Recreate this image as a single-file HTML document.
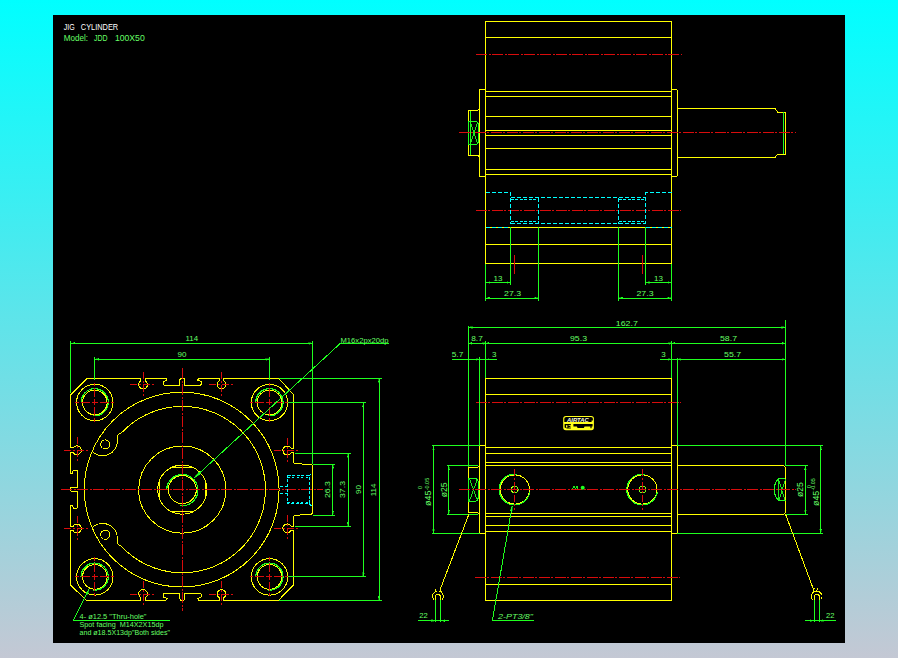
<!DOCTYPE html>
<html><head><meta charset="utf-8"><title>JIG CYLINDER JDD 100X50</title>
<style>
html,body{margin:0;padding:0;}
body{width:898px;height:658px;overflow:hidden;background:linear-gradient(to bottom,#00ffff 0%,#61e3e9 50%,#c4c8d4 100%);font-family:"Liberation Sans",sans-serif;}
#cad{position:absolute;left:53px;top:15px;width:792px;height:628px;background:#000;}
svg{position:absolute;left:0;top:0;}
svg text{font-family:"Liberation Sans",sans-serif;}
</style></head><body>
<div id="cad"></div>
<svg width="898" height="658" viewBox="0 0 898 658" shape-rendering="crispEdges">
<path d="M485.5,21.4 H671.7 V263.6 H485.5 Z" stroke="#ffff00" stroke-width="1.0" fill="none" />
<line x1="485.5" y1="37.3" x2="671.7" y2="37.3" stroke="#ffff00" stroke-width="1.0" />
<line x1="485.5" y1="91.4" x2="671.7" y2="91.4" stroke="#ffff00" stroke-width="1.0" />
<line x1="485.5" y1="96.2" x2="671.7" y2="96.2" stroke="#ffff00" stroke-width="1.0" />
<line x1="485.5" y1="116.4" x2="671.7" y2="116.4" stroke="#ffff00" stroke-width="1.0" />
<line x1="485.5" y1="130.5" x2="671.7" y2="130.5" stroke="#ffff00" stroke-width="1.0" />
<line x1="485.5" y1="135.2" x2="671.7" y2="135.2" stroke="#ffff00" stroke-width="1.0" />
<line x1="485.5" y1="148.5" x2="671.7" y2="148.5" stroke="#ffff00" stroke-width="1.0" />
<line x1="485.5" y1="169.5" x2="671.7" y2="169.5" stroke="#ffff00" stroke-width="1.0" />
<line x1="485.5" y1="174.3" x2="671.7" y2="174.3" stroke="#ffff00" stroke-width="1.0" />
<line x1="485.5" y1="227.4" x2="671.7" y2="227.4" stroke="#ffff00" stroke-width="1.0" />
<line x1="485.5" y1="244.4" x2="671.7" y2="244.4" stroke="#ffff00" stroke-width="1.0" />
<path d="M485.5,89.3 H481 Q479.4,89.3 479.4,91 V175 Q479.4,176.6 481,176.6 H485.5" stroke="#ffff00" stroke-width="1.0" fill="none" />
<path d="M671.7,89.3 H676 Q677.4,89.3 677.4,91 V175 Q677.4,176.6 676,176.6 H671.7" stroke="#ffff00" stroke-width="1.0" fill="none" />
<path d="M479.4,108.5 L477.5,110.5 H468.4 V155.2 H477.5 L479.4,157" stroke="#ffff00" stroke-width="1.0" fill="none" />
<line x1="470.2" y1="110.5" x2="470.2" y2="155.2" stroke="#1fff1f" stroke-width="1.0" />
<path d="M468.4,121.5 H476.5 Q478.5,122.5 478.5,125 V141 Q478.5,143.5 476.5,144.5 H468.4 Z" stroke="#1fff1f" stroke-width="1.0" fill="none" />
<path d="M470.2,122 L477.5,144 M477.5,122 L470.2,144" stroke="#1fff1f" stroke-width="0.9" fill="none" />
<path d="M677.4,108.5 H775 L777.5,112 H785.3 V154 H777.5 L775,157.5 H677.4" stroke="#ffff00" stroke-width="1.0" fill="none" />
<line x1="783.0" y1="112.0" x2="783.0" y2="154.0" stroke="#1fff1f" stroke-width="1.0" />
<line x1="476.0" y1="54.7" x2="681.6" y2="54.7" stroke="#d80c0c" stroke-width="1.0" stroke-dasharray="11 1.5 2 1.5"/>
<line x1="458.8" y1="132.7" x2="795.6" y2="132.7" stroke="#d80c0c" stroke-width="1.0" stroke-dasharray="11 1.5 2 1.5"/>
<line x1="475.6" y1="210.7" x2="681.0" y2="210.7" stroke="#d80c0c" stroke-width="1.0" stroke-dasharray="11 1.5 2 1.5"/>
<path d="M485.5,192.5 H510.5 V224 M538.5,197.6 V223.5 M510.5,197.6 H645.7 M510.5,223.5 H645.7 M671.7,192.5 H645.7 V224 M618.6,197.6 V223.5" stroke="#00ffff" stroke-width="1.1" fill="none" stroke-dasharray="4 2"/>
<path d="M510.5,199.2 H538.5 M510.5,221.9 H538.5 M618.6,199.2 H645.7 M618.6,221.9 H645.7" stroke="#00ffff" stroke-width="1.0" fill="none" stroke-dasharray="3 1.5"/>
<path d="M485.5,227.4 H510.5 M645.7,227.4 H671.7" stroke="#00ffff" stroke-width="1.0" fill="none" stroke-dasharray="4 2"/>
<line x1="510.6" y1="227.4" x2="510.6" y2="284.5" stroke="#1fff1f" stroke-width="1.0" />
<line x1="538.5" y1="227.4" x2="538.5" y2="300.5" stroke="#1fff1f" stroke-width="1.0" />
<line x1="485.5" y1="263.6" x2="485.5" y2="300.5" stroke="#1fff1f" stroke-width="1.0" />
<line x1="485.5" y1="282.5" x2="510.6" y2="282.5" stroke="#1fff1f" stroke-width="1.0" />
<path d="M485.5,282.5 L489.5,281.6 L489.5,283.4 Z" fill="#1fff1f" stroke="#1fff1f" stroke-width="0.4"/>
<path d="M510.6,282.5 L506.6,283.4 L506.6,281.6 Z" fill="#1fff1f" stroke="#1fff1f" stroke-width="0.4"/>
<line x1="485.5" y1="298.0" x2="538.5" y2="298.0" stroke="#1fff1f" stroke-width="1.0" />
<path d="M485.5,298.0 L489.5,297.1 L489.5,298.9 Z" fill="#1fff1f" stroke="#1fff1f" stroke-width="0.4"/>
<path d="M538.5,298.0 L534.5,298.9 L534.5,297.1 Z" fill="#1fff1f" stroke="#1fff1f" stroke-width="0.4"/>
<line x1="645.7" y1="227.4" x2="645.7" y2="284.5" stroke="#1fff1f" stroke-width="1.0" />
<line x1="618.6" y1="227.4" x2="618.6" y2="300.5" stroke="#1fff1f" stroke-width="1.0" />
<line x1="671.7" y1="263.6" x2="671.7" y2="300.5" stroke="#1fff1f" stroke-width="1.0" />
<line x1="645.7" y1="282.5" x2="671.7" y2="282.5" stroke="#1fff1f" stroke-width="1.0" />
<path d="M645.7,282.5 L649.7,281.6 L649.7,283.4 Z" fill="#1fff1f" stroke="#1fff1f" stroke-width="0.4"/>
<path d="M671.7,282.5 L667.7,283.4 L667.7,281.6 Z" fill="#1fff1f" stroke="#1fff1f" stroke-width="0.4"/>
<line x1="618.6" y1="298.0" x2="671.7" y2="298.0" stroke="#1fff1f" stroke-width="1.0" />
<path d="M618.6,298.0 L622.6,297.1 L622.6,298.9 Z" fill="#1fff1f" stroke="#1fff1f" stroke-width="0.4"/>
<path d="M671.7,298.0 L667.7,298.9 L667.7,297.1 Z" fill="#1fff1f" stroke="#1fff1f" stroke-width="0.4"/>
<text x="498.0" y="280.6" font-size="8" fill="#66ff66" text-anchor="middle" >13</text>
<text x="512.6" y="295.8" font-size="8" fill="#66ff66" text-anchor="middle" textLength="17.0" lengthAdjust="spacingAndGlyphs" >27.3</text>
<text x="658.5" y="280.6" font-size="8" fill="#66ff66" text-anchor="middle" >13</text>
<text x="645.0" y="295.8" font-size="8" fill="#66ff66" text-anchor="middle" textLength="17.0" lengthAdjust="spacingAndGlyphs" >27.3</text>
<line x1="514.6" y1="254.7" x2="514.6" y2="273.6" stroke="#d80c0c" stroke-width="1.0" />
<line x1="642.6" y1="254.7" x2="642.6" y2="273.6" stroke="#d80c0c" stroke-width="1.0" />
<path d="M70.5,394.9 L87,378.4 H140.7 V380.9 A4.4,4.4 0 1 0 145.5,380.9 V378.4 H165.9 L167,380.1 L163.5,381.6 L163.3,384.1 L164.5,385.6 H179.8 V379.6 L180.8,378.4 H183.9 L184.9,379.6 V385.6 H200.2 L201.3,384.1 L201.1,381.6 L197.7,380.1 L198.7,378.4 H219.1 V380.9 A4.4,4.4 0 1 0 223.9,380.9 V378.4 H278.7 L293.6,394.6 V448.1 H290.9 A4.4,4.4 0 1 0 290.9,452.9 H293.6 V462.2 Q293.8,463.5 295.5,463.5 H301.5 L302.5,464.5 H311.4 L312.7,466.3 V513 L311,514.6 H302.5 L295.5,515.6 Q293.8,515.8 293.6,517 V526.0 H290.9 A4.4,4.4 0 1 0 290.9,530.8 H293.6 V584.8 L278.6,600.2" stroke="#ffff00" stroke-width="1.0" fill="none" />
<path d="M70.5,585.2 L86.4,600.2 H140.7 V597.7 A4.4,4.4 0 1 1 145.5,597.7 V600.2 H165.9 L167,598.5 L163.5,597.0 L163.3,594.5 L164.5,593.0 H179.8 V599.0 L180.8,600.2 H183.9 L184.9,599.0 V593.0 H200.2 L201.3,594.5 L201.1,597.0 L197.7,598.5 L198.7,600.2 H219.1 V597.7 A4.4,4.4 0 1 1 223.9,597.7 V600.2 H278.6" stroke="#ffff00" stroke-width="1.0" fill="none" />
<path d="M70.5,394.9 V447.9 H73.2 A4.4,4.4 0 1 1 73.2,452.7 H70.5 V473 L72.9,473.6 L72.9,471 L73.8,470.3 H76.6 L77.4,471 V487.5 H71.2 L70.5,488.1 V490.6 L71.2,491.2 H77.4 V507.6 L76.6,508.4 H73.8 L73.1,507.8 L72.9,505.2 L70.5,505.8 V526.1 H73.2 A4.4,4.4 0 1 1 73.2,530.9 H70.5 V585.2" stroke="#ffff00" stroke-width="1.0" fill="none" />
<circle cx="94.8" cy="402.5" r="18.2" stroke="#ffff00" stroke-width="1.0" fill="none" />
<circle cx="94.8" cy="402.5" r="12.3" stroke="#ffff00" stroke-width="1.0" fill="none" />
<path d="M81.1,402.2 A13.6,13.6 0 1 1 93.2,415.8" stroke="#1fff1f" stroke-width="1.2" fill="none" />
<line x1="75.1" y1="402.5" x2="114.5" y2="402.5" stroke="#d80c0c" stroke-width="1.0" stroke-dasharray="3.4 2 9 2 6 2 9 2 3.4 2"/>
<line x1="94.8" y1="382.8" x2="94.8" y2="422.2" stroke="#d80c0c" stroke-width="1.0" stroke-dasharray="3.4 2 9 2 6 2 9 2 3.4 2"/>
<circle cx="269.5" cy="402.5" r="18.2" stroke="#ffff00" stroke-width="1.0" fill="none" />
<circle cx="269.5" cy="402.5" r="12.3" stroke="#ffff00" stroke-width="1.0" fill="none" />
<path d="M255.8,402.2 A13.6,13.6 0 1 1 267.9,415.8" stroke="#1fff1f" stroke-width="1.2" fill="none" />
<line x1="249.8" y1="402.5" x2="289.2" y2="402.5" stroke="#d80c0c" stroke-width="1.0" stroke-dasharray="3.4 2 9 2 6 2 9 2 3.4 2"/>
<line x1="269.5" y1="382.8" x2="269.5" y2="422.2" stroke="#d80c0c" stroke-width="1.0" stroke-dasharray="3.4 2 9 2 6 2 9 2 3.4 2"/>
<circle cx="94.8" cy="576.9" r="18.2" stroke="#ffff00" stroke-width="1.0" fill="none" />
<circle cx="94.8" cy="576.9" r="12.3" stroke="#ffff00" stroke-width="1.0" fill="none" />
<path d="M81.1,576.6 A13.6,13.6 0 1 1 93.2,590.2" stroke="#1fff1f" stroke-width="1.2" fill="none" />
<line x1="75.1" y1="576.9" x2="114.5" y2="576.9" stroke="#d80c0c" stroke-width="1.0" stroke-dasharray="3.4 2 9 2 6 2 9 2 3.4 2"/>
<line x1="94.8" y1="557.2" x2="94.8" y2="596.6" stroke="#d80c0c" stroke-width="1.0" stroke-dasharray="3.4 2 9 2 6 2 9 2 3.4 2"/>
<circle cx="269.5" cy="576.9" r="18.2" stroke="#ffff00" stroke-width="1.0" fill="none" />
<circle cx="269.5" cy="576.9" r="12.3" stroke="#ffff00" stroke-width="1.0" fill="none" />
<path d="M255.8,576.6 A13.6,13.6 0 1 1 267.9,590.2" stroke="#1fff1f" stroke-width="1.2" fill="none" />
<line x1="249.8" y1="576.9" x2="289.2" y2="576.9" stroke="#d80c0c" stroke-width="1.0" stroke-dasharray="3.4 2 9 2 6 2 9 2 3.4 2"/>
<line x1="269.5" y1="557.2" x2="269.5" y2="596.6" stroke="#d80c0c" stroke-width="1.0" stroke-dasharray="3.4 2 9 2 6 2 9 2 3.4 2"/>
<line x1="130.1" y1="384.7" x2="156.1" y2="384.7" stroke="#d80c0c" stroke-width="1.0" stroke-dasharray="7 2 2 2"/>
<line x1="143.1" y1="371.7" x2="143.1" y2="397.7" stroke="#d80c0c" stroke-width="1.0" stroke-dasharray="7 2 2 2"/>
<line x1="208.5" y1="384.7" x2="234.5" y2="384.7" stroke="#d80c0c" stroke-width="1.0" stroke-dasharray="7 2 2 2"/>
<line x1="221.5" y1="371.7" x2="221.5" y2="397.7" stroke="#d80c0c" stroke-width="1.0" stroke-dasharray="7 2 2 2"/>
<line x1="130.1" y1="594.2" x2="156.1" y2="594.2" stroke="#d80c0c" stroke-width="1.0" stroke-dasharray="7 2 2 2"/>
<line x1="143.1" y1="581.2" x2="143.1" y2="607.2" stroke="#d80c0c" stroke-width="1.0" stroke-dasharray="7 2 2 2"/>
<line x1="208.5" y1="594.2" x2="234.5" y2="594.2" stroke="#d80c0c" stroke-width="1.0" stroke-dasharray="7 2 2 2"/>
<line x1="221.5" y1="581.2" x2="221.5" y2="607.2" stroke="#d80c0c" stroke-width="1.0" stroke-dasharray="7 2 2 2"/>
<line x1="64.2" y1="450.3" x2="90.2" y2="450.3" stroke="#d80c0c" stroke-width="1.0" stroke-dasharray="7 2 2 2"/>
<line x1="77.2" y1="437.3" x2="77.2" y2="463.3" stroke="#d80c0c" stroke-width="1.0" stroke-dasharray="7 2 2 2"/>
<line x1="64.2" y1="528.5" x2="90.2" y2="528.5" stroke="#d80c0c" stroke-width="1.0" stroke-dasharray="7 2 2 2"/>
<line x1="77.2" y1="515.5" x2="77.2" y2="541.5" stroke="#d80c0c" stroke-width="1.0" stroke-dasharray="7 2 2 2"/>
<line x1="274.0" y1="450.5" x2="300.0" y2="450.5" stroke="#d80c0c" stroke-width="1.0" stroke-dasharray="7 2 2 2"/>
<line x1="287.0" y1="437.5" x2="287.0" y2="463.5" stroke="#d80c0c" stroke-width="1.0" stroke-dasharray="7 2 2 2"/>
<line x1="274.0" y1="528.4" x2="300.0" y2="528.4" stroke="#d80c0c" stroke-width="1.0" stroke-dasharray="7 2 2 2"/>
<line x1="287.0" y1="515.4" x2="287.0" y2="541.4" stroke="#d80c0c" stroke-width="1.0" stroke-dasharray="7 2 2 2"/>
<circle cx="181.7" cy="489.6" r="97.4" stroke="#ffff00" stroke-width="1.0" fill="none" />
<circle cx="182.3" cy="489.6" r="43.6" stroke="#ffff00" stroke-width="1.0" fill="none" />
<circle cx="182.3" cy="489.6" r="24.6" stroke="#ffff00" stroke-width="1.0" fill="none" />
<circle cx="182.3" cy="489.6" r="14.0" stroke="#ffff00" stroke-width="1.0" fill="none" />
<line x1="171.3" y1="467.6" x2="193.3" y2="467.6" stroke="#ffff00" stroke-width="1.0" />
<line x1="171.3" y1="511.6" x2="193.3" y2="511.6" stroke="#ffff00" stroke-width="1.0" />
<line x1="159.5" y1="480.4" x2="159.5" y2="498.8" stroke="#ffff00" stroke-width="1.0" />
<line x1="205.1" y1="480.4" x2="205.1" y2="498.8" stroke="#ffff00" stroke-width="1.0" />
<path d="M166.7,490.0 A15.6,15.6 0 1 1 180.3,505.6" stroke="#1fff1f" stroke-width="1.2" fill="none" />
<path d="M92.1,451.4 A14.8,14.8 0 0 0 117.4,441.0 V437.0 Q117.4,434.0 121.3,433.0 A83.2,83.2 0 1 1 121.3,546.2 Q117.4,545.2 117.4,542.2 V538.2 A14.8,14.8 0 0 0 92.1,527.8" stroke="#ffff00" stroke-width="1.0" fill="none" />
<circle cx="105.2" cy="444.4" r="4.5" stroke="#ffff00" stroke-width="1.0" fill="none" />
<circle cx="105.2" cy="534.8" r="4.5" stroke="#ffff00" stroke-width="1.0" fill="none" />
<line x1="61.0" y1="489.4" x2="323.0" y2="489.4" stroke="#d80c0c" stroke-width="1.0" stroke-dasharray="11 1.5 2 1.5"/>
<line x1="182.3" y1="368.0" x2="182.3" y2="611.0" stroke="#d80c0c" stroke-width="1.0" stroke-dasharray="11 1.5 2 1.5"/>
<path d="M287.5,475.8 H309 V503.6 H287.5 Z" stroke="#00ffff" stroke-width="1.0" fill="none" stroke-dasharray="3 1.6"/>
<path d="M309,475.8 L311.5,473.6 M309,503.6 L311.5,505.8" stroke="#00ffff" stroke-width="1.0" fill="none" />
<path d="M287.5,477.4 H309 M287.5,502 H309" stroke="#00ffff" stroke-width="1.0" fill="none" stroke-dasharray="2 2.5"/>
<path d="M280.4,486.3 H287.5 M280.4,493.2 H287.5" stroke="#00ffff" stroke-width="1.0" fill="none" stroke-dasharray="3 1.2"/>
<line x1="70.5" y1="341.4" x2="70.5" y2="393.0" stroke="#1fff1f" stroke-width="1.0" />
<line x1="312.7" y1="341.4" x2="312.7" y2="464.0" stroke="#1fff1f" stroke-width="1.0" />
<line x1="70.5" y1="343.3" x2="312.7" y2="343.3" stroke="#1fff1f" stroke-width="1.0" />
<path d="M70.5,343.3 L74.5,342.4 L74.5,344.2 Z" fill="#1fff1f" stroke="#1fff1f" stroke-width="0.4"/>
<path d="M312.7,343.3 L308.7,344.2 L308.7,342.4 Z" fill="#1fff1f" stroke="#1fff1f" stroke-width="0.4"/>
<text x="191.8" y="341.0" font-size="8" fill="#66ff66" text-anchor="middle" textLength="12.5" lengthAdjust="spacingAndGlyphs" >114</text>
<line x1="94.8" y1="357.3" x2="94.8" y2="379.6" stroke="#1fff1f" stroke-width="1.0" />
<line x1="269.5" y1="357.3" x2="269.5" y2="379.6" stroke="#1fff1f" stroke-width="1.0" />
<line x1="94.8" y1="359.2" x2="269.5" y2="359.2" stroke="#1fff1f" stroke-width="1.0" />
<path d="M94.8,359.2 L98.8,358.3 L98.8,360.1 Z" fill="#1fff1f" stroke="#1fff1f" stroke-width="0.4"/>
<path d="M269.5,359.2 L265.5,360.1 L265.5,358.3 Z" fill="#1fff1f" stroke="#1fff1f" stroke-width="0.4"/>
<text x="182.0" y="357.0" font-size="8" fill="#66ff66" text-anchor="middle" >90</text>
<line x1="279.0" y1="378.4" x2="381.5" y2="378.4" stroke="#1fff1f" stroke-width="1.0" />
<line x1="279.0" y1="600.2" x2="381.5" y2="600.2" stroke="#1fff1f" stroke-width="1.0" />
<line x1="379.0" y1="378.4" x2="379.0" y2="600.2" stroke="#1fff1f" stroke-width="1.0" />
<path d="M379.0,378.4 L379.9,382.4 L378.1,382.4 Z" fill="#1fff1f" stroke="#1fff1f" stroke-width="0.4"/>
<path d="M379.0,600.2 L378.1,596.2 L379.9,596.2 Z" fill="#1fff1f" stroke="#1fff1f" stroke-width="0.4"/>
<line x1="288.0" y1="402.5" x2="365.5" y2="402.5" stroke="#1fff1f" stroke-width="1.0" />
<line x1="288.0" y1="576.9" x2="365.5" y2="576.9" stroke="#1fff1f" stroke-width="1.0" />
<line x1="363.3" y1="402.5" x2="363.3" y2="576.9" stroke="#1fff1f" stroke-width="1.0" />
<path d="M363.3,402.5 L364.2,406.5 L362.4,406.5 Z" fill="#1fff1f" stroke="#1fff1f" stroke-width="0.4"/>
<path d="M363.3,576.9 L362.4,572.9 L364.2,572.9 Z" fill="#1fff1f" stroke="#1fff1f" stroke-width="0.4"/>
<line x1="294.8" y1="453.2" x2="350.5" y2="453.2" stroke="#1fff1f" stroke-width="1.0" />
<line x1="294.8" y1="526.2" x2="350.5" y2="526.2" stroke="#1fff1f" stroke-width="1.0" />
<line x1="348.1" y1="453.2" x2="348.1" y2="526.2" stroke="#1fff1f" stroke-width="1.0" />
<path d="M348.1,453.2 L349.0,457.2 L347.2,457.2 Z" fill="#1fff1f" stroke="#1fff1f" stroke-width="0.4"/>
<path d="M348.1,526.2 L347.2,522.2 L349.0,522.2 Z" fill="#1fff1f" stroke="#1fff1f" stroke-width="0.4"/>
<line x1="312.7" y1="464.2" x2="335.0" y2="464.2" stroke="#1fff1f" stroke-width="1.0" />
<line x1="312.7" y1="515.0" x2="335.0" y2="515.0" stroke="#1fff1f" stroke-width="1.0" />
<line x1="332.8" y1="464.2" x2="332.8" y2="515.0" stroke="#1fff1f" stroke-width="1.0" />
<path d="M332.8,464.2 L333.7,468.2 L331.9,468.2 Z" fill="#1fff1f" stroke="#1fff1f" stroke-width="0.4"/>
<path d="M332.8,515.0 L331.9,511.0 L333.7,511.0 Z" fill="#1fff1f" stroke="#1fff1f" stroke-width="0.4"/>
<text x="330.2" y="489.5" font-size="8" fill="#66ff66" text-anchor="middle" transform="rotate(-90 330.2 489.5)" textLength="17.0" lengthAdjust="spacingAndGlyphs" >26.3</text>
<text x="345.3" y="489.5" font-size="8" fill="#66ff66" text-anchor="middle" transform="rotate(-90 345.3 489.5)" textLength="17.0" lengthAdjust="spacingAndGlyphs" >37.3</text>
<text x="361.0" y="489.5" font-size="8" fill="#66ff66" text-anchor="middle" transform="rotate(-90 361.0 489.5)" >90</text>
<text x="376.0" y="490.0" font-size="8" fill="#66ff66" text-anchor="middle" transform="rotate(-90 376.0 490.0)" textLength="12.5" lengthAdjust="spacingAndGlyphs" >114</text>
<path d="M389,343.7 H340 L193.8,478.3" stroke="#1fff1f" stroke-width="1.0" fill="none" />
<path d="M193.8,478.3 L198.8,471.9 L200.6,473.8 Z" fill="#1fff1f" stroke="#1fff1f" stroke-width="0.4"/>
<text x="340.5" y="342.6" font-size="7.5" fill="#66ff66" text-anchor="start" textLength="48.0" lengthAdjust="spacingAndGlyphs" >M16x2px20dp</text>
<path d="M169.7,620.4 H73.3 L88.9,589.5" stroke="#1fff1f" stroke-width="1.0" fill="none" />
<path d="M88.9,589.5 L87.6,594.4 L85.6,593.4 Z" fill="#1fff1f" stroke="#1fff1f" stroke-width="0.4"/>
<text x="79.5" y="618.9" font-size="7.5" fill="#66ff66" text-anchor="start" textLength="67.0" lengthAdjust="spacingAndGlyphs" >4- ø12.5 "Thru-hole"</text>
<text x="79.5" y="627.3" font-size="7.5" fill="#66ff66" text-anchor="start" textLength="84.0" lengthAdjust="spacingAndGlyphs" xml:space="preserve">Spot facing  M14X2X15dp</text>
<text x="79.5" y="635.2" font-size="7.5" fill="#66ff66" text-anchor="start" textLength="90.5" lengthAdjust="spacingAndGlyphs" >and ø18.5X13dp"Both sides"</text>
<path d="M485.5,378.2 H671.5 V600.5 H485.5 Z" stroke="#ffff00" stroke-width="1.0" fill="none" />
<line x1="485.5" y1="394.1" x2="671.5" y2="394.1" stroke="#ffff00" stroke-width="1.0" />
<line x1="485.5" y1="447.3" x2="671.5" y2="447.3" stroke="#ffff00" stroke-width="1.0" />
<line x1="485.5" y1="453.5" x2="671.5" y2="453.5" stroke="#ffff00" stroke-width="1.0" />
<line x1="485.5" y1="462.6" x2="671.5" y2="462.6" stroke="#ffff00" stroke-width="1.0" />
<line x1="485.5" y1="465.6" x2="671.5" y2="465.6" stroke="#ffff00" stroke-width="1.0" />
<line x1="485.5" y1="513.8" x2="671.5" y2="513.8" stroke="#ffff00" stroke-width="1.0" />
<line x1="485.5" y1="516.8" x2="671.5" y2="516.8" stroke="#ffff00" stroke-width="1.0" />
<line x1="485.5" y1="525.7" x2="671.5" y2="525.7" stroke="#ffff00" stroke-width="1.0" />
<line x1="485.5" y1="531.8" x2="671.5" y2="531.8" stroke="#ffff00" stroke-width="1.0" />
<line x1="485.5" y1="584.6" x2="671.5" y2="584.6" stroke="#ffff00" stroke-width="1.0" />
<path d="M485.5,445.5 H481 Q479.6,445.5 479.6,447 V532 Q479.6,533.4 481,533.4 H485.5" stroke="#ffff00" stroke-width="1.0" fill="none" />
<path d="M671.5,445.5 H676 Q677.4,445.5 677.4,447 V532 Q677.4,533.4 676,533.4 H671.5" stroke="#ffff00" stroke-width="1.0" fill="none" />
<path d="M677.4,465.4 H783.6 L785.5,467.2 V512.4 L783.6,514.2 H677.4" stroke="#ffff00" stroke-width="1.0" fill="none" />
<path d="M785.4,478.3 H778.6 Q774.2,483 774.2,489.5 Q774.2,496 778.6,500.7 H785.4" stroke="#1fff1f" stroke-width="1.1" fill="none" />
<path d="M778.6,478.5 L785.4,500.5 M785.4,478.5 L778.6,500.5" stroke="#1fff1f" stroke-width="0.9" fill="none" />
<line x1="778.6" y1="478.3" x2="778.6" y2="500.7" stroke="#1fff1f" stroke-width="0.9" />
<path d="M479.6,465.5 L477,467.6 H468.7 V512 H477 L479.6,514" stroke="#ffff00" stroke-width="1.0" fill="none" />
<path d="M468.7,478.5 H476 Q478.3,479.5 478.3,482 V497.6 Q478.3,500 476,501.1 H468.7 Z" stroke="#1fff1f" stroke-width="1.1" fill="none" />
<path d="M469.5,479 L477.5,500.6 M477.5,479 L469.5,500.6" stroke="#1fff1f" stroke-width="0.9" fill="none" />
<circle cx="514.8" cy="489.5" r="14.6" stroke="#ffff00" stroke-width="1.0" fill="none" />
<circle cx="514.8" cy="489.5" r="3.3" stroke="#ffff00" stroke-width="1.0" fill="none" />
<path d="M517.2,474.4 A15.4,15.4 0 1 0 529.7,492.3" stroke="#1fff1f" stroke-width="1.1" fill="none" />
<circle cx="514.8" cy="489.5" r="3.3" stroke="#1fff1f" stroke-width="0.6" fill="none" />
<line x1="514.8" y1="469.0" x2="514.8" y2="509.5" stroke="#d80c0c" stroke-width="1.0" stroke-dasharray="7 2 2 2"/>
<circle cx="642.4" cy="489.5" r="14.6" stroke="#ffff00" stroke-width="1.0" fill="none" />
<circle cx="642.4" cy="489.5" r="3.3" stroke="#ffff00" stroke-width="1.0" fill="none" />
<path d="M644.8,474.4 A15.4,15.4 0 1 0 657.3,492.3" stroke="#1fff1f" stroke-width="1.1" fill="none" />
<circle cx="642.4" cy="489.5" r="3.3" stroke="#1fff1f" stroke-width="0.6" fill="none" />
<line x1="642.4" y1="469.0" x2="642.4" y2="509.5" stroke="#d80c0c" stroke-width="1.0" stroke-dasharray="7 2 2 2"/>
<line x1="475.5" y1="402.4" x2="681.4" y2="402.4" stroke="#d80c0c" stroke-width="1.0" stroke-dasharray="11 1.5 2 1.5"/>
<line x1="459.0" y1="489.4" x2="796.0" y2="489.4" stroke="#d80c0c" stroke-width="1.0" stroke-dasharray="11 1.5 2 1.5"/>
<line x1="474.6" y1="577.3" x2="680.0" y2="577.3" stroke="#d80c0c" stroke-width="1.0" stroke-dasharray="11 1.5 2 1.5"/>
<g shape-rendering="auto">
<rect x="563.2" y="415.9" width="30.7" height="14.3" rx="2.6" fill="#ffff1a"/>
<path d="M566.2,417 H591 Q592.9,417 592.9,418.8 V420.5 H591.6 V422.1 H564.3 V418.8 Q564.3,417 566.2,417 Z" fill="#000"/>
<text x="567" y="421.6" font-size="5.2" font-style="italic" font-weight="bold" fill="#ffffe0" textLength="21.8" lengthAdjust="spacingAndGlyphs">AIRTAC</text>
<path d="M564.6,424 H570.8 V425.2 H568.6 V425.9 H570.4 V426.9 H568.6 V427.6 H570.8 V428.6 H567 L564.6,427.4 Z M573.4,424 H592.6 V426.6 H591.6 V428.2 H590.4 V426.6 H584.6 L583.8,428 H577.6 L576.8,426.6 H573.4 Z" fill="#000"/>
<path d="M566,425.2 H567.4 V427.4 H566 Z" fill="#ffff1a"/>
</g>
<path d="M572.4,489.2 L574,486 L575.4,489.2 M575.2,489.2 L576.8,486 L578.3,489.2" stroke="#1fff1f" stroke-width="0.9" fill="none" />
<circle cx="582.7" cy="487.8" r="2" fill="#1fff1f" shape-rendering="auto"/>
<line x1="468.7" y1="325.8" x2="468.7" y2="467.0" stroke="#1fff1f" stroke-width="1.0" />
<line x1="785.4" y1="320.3" x2="785.4" y2="465.0" stroke="#1fff1f" stroke-width="1.0" />
<line x1="468.7" y1="327.4" x2="785.4" y2="327.4" stroke="#1fff1f" stroke-width="1.0" />
<path d="M468.7,327.4 L472.7,326.5 L472.7,328.3 Z" fill="#1fff1f" stroke="#1fff1f" stroke-width="0.4"/>
<path d="M785.4,327.4 L781.4,328.3 L781.4,326.5 Z" fill="#1fff1f" stroke="#1fff1f" stroke-width="0.4"/>
<text x="626.8" y="325.6" font-size="8" fill="#66ff66" text-anchor="middle" textLength="22.0" lengthAdjust="spacingAndGlyphs" >162.7</text>
<line x1="485.5" y1="341.2" x2="485.5" y2="378.0" stroke="#1fff1f" stroke-width="1.0" />
<line x1="671.5" y1="341.2" x2="671.5" y2="378.0" stroke="#1fff1f" stroke-width="1.0" />
<line x1="468.7" y1="343.3" x2="785.4" y2="343.3" stroke="#1fff1f" stroke-width="1.0" />
<path d="M468.7,343.3 L471.7,342.4 L471.7,344.2 Z" fill="#1fff1f" stroke="#1fff1f" stroke-width="0.4"/>
<path d="M485.5,343.3 L482.5,344.2 L482.5,342.4 Z" fill="#1fff1f" stroke="#1fff1f" stroke-width="0.4"/>
<path d="M485.5,343.3 L488.5,342.4 L488.5,344.2 Z" fill="#1fff1f" stroke="#1fff1f" stroke-width="0.4"/>
<path d="M671.5,343.3 L668.5,344.2 L668.5,342.4 Z" fill="#1fff1f" stroke="#1fff1f" stroke-width="0.4"/>
<path d="M671.5,343.3 L674.5,342.4 L674.5,344.2 Z" fill="#1fff1f" stroke="#1fff1f" stroke-width="0.4"/>
<path d="M785.4,343.3 L782.4,344.2 L782.4,342.4 Z" fill="#1fff1f" stroke="#1fff1f" stroke-width="0.4"/>
<text x="477.0" y="340.8" font-size="8" fill="#66ff66" text-anchor="middle" textLength="11.5" lengthAdjust="spacingAndGlyphs" >8.7</text>
<text x="578.5" y="340.8" font-size="8" fill="#66ff66" text-anchor="middle" textLength="17.0" lengthAdjust="spacingAndGlyphs" >95.3</text>
<text x="728.5" y="340.8" font-size="8" fill="#66ff66" text-anchor="middle" textLength="17.0" lengthAdjust="spacingAndGlyphs" >58.7</text>
<line x1="479.6" y1="357.3" x2="479.6" y2="445.5" stroke="#1fff1f" stroke-width="1.0" />
<line x1="677.4" y1="357.5" x2="677.4" y2="445.5" stroke="#1fff1f" stroke-width="1.0" />
<line x1="451.8" y1="359.4" x2="497.0" y2="359.4" stroke="#1fff1f" stroke-width="1.0" />
<path d="M479.6,359.4 L476.1,360.3 L476.1,358.5 Z" fill="#1fff1f" stroke="#1fff1f" stroke-width="0.4"/>
<path d="M485.5,359.4 L489.0,358.5 L489.0,360.3 Z" fill="#1fff1f" stroke="#1fff1f" stroke-width="0.4"/>
<text x="457.5" y="356.8" font-size="8" fill="#66ff66" text-anchor="middle" textLength="11.5" lengthAdjust="spacingAndGlyphs" >5.7</text>
<text x="494.2" y="356.8" font-size="8" fill="#66ff66" text-anchor="middle" >3</text>
<line x1="660.2" y1="359.4" x2="785.4" y2="359.4" stroke="#1fff1f" stroke-width="1.0" />
<path d="M671.5,359.4 L668.0,360.3 L668.0,358.5 Z" fill="#1fff1f" stroke="#1fff1f" stroke-width="0.4"/>
<path d="M677.4,359.4 L680.9,358.5 L680.9,360.3 Z" fill="#1fff1f" stroke="#1fff1f" stroke-width="0.4"/>
<path d="M785.4,359.4 L781.9,360.3 L781.9,358.5 Z" fill="#1fff1f" stroke="#1fff1f" stroke-width="0.4"/>
<text x="663.4" y="356.8" font-size="8" fill="#66ff66" text-anchor="middle" >3</text>
<text x="732.6" y="356.8" font-size="8" fill="#66ff66" text-anchor="middle" textLength="17.0" lengthAdjust="spacingAndGlyphs" >55.7</text>
<line x1="432.0" y1="445.5" x2="479.6" y2="445.5" stroke="#1fff1f" stroke-width="1.0" />
<line x1="432.0" y1="533.4" x2="479.6" y2="533.4" stroke="#1fff1f" stroke-width="1.0" />
<line x1="433.5" y1="445.5" x2="433.5" y2="533.4" stroke="#1fff1f" stroke-width="1.0" />
<path d="M433.5,445.5 L434.4,449.5 L432.6,449.5 Z" fill="#1fff1f" stroke="#1fff1f" stroke-width="0.4"/>
<path d="M433.5,533.4 L432.6,529.4 L434.4,529.4 Z" fill="#1fff1f" stroke="#1fff1f" stroke-width="0.4"/>
<line x1="447.0" y1="465.5" x2="478.0" y2="465.5" stroke="#1fff1f" stroke-width="1.0" />
<line x1="447.0" y1="514.0" x2="478.0" y2="514.0" stroke="#1fff1f" stroke-width="1.0" />
<line x1="448.8" y1="465.5" x2="448.8" y2="514.0" stroke="#1fff1f" stroke-width="1.0" />
<path d="M448.8,465.5 L449.7,469.5 L447.9,469.5 Z" fill="#1fff1f" stroke="#1fff1f" stroke-width="0.4"/>
<path d="M448.8,514.0 L447.9,510.0 L449.7,510.0 Z" fill="#1fff1f" stroke="#1fff1f" stroke-width="0.4"/>
<text x="430.9" y="506.0" font-size="8.4" fill="#66ff66" text-anchor="start" transform="rotate(-90 430.9 506.0)" textLength="15.5" lengthAdjust="spacingAndGlyphs" >ø45</text>
<text x="428.6" y="490.3" font-size="5.6" fill="#66ff66" text-anchor="start" transform="rotate(-90 428.6 490.3)" textLength="12.5" lengthAdjust="spacingAndGlyphs" >-0.05</text>
<text x="422.0" y="487.4" font-size="5.6" fill="#66ff66" text-anchor="middle" transform="rotate(-90 422.0 487.4)" >0</text>
<text x="447.2" y="489.8" font-size="8.4" fill="#66ff66" text-anchor="middle" transform="rotate(-90 447.2 489.8)" textLength="14.8" lengthAdjust="spacingAndGlyphs" >ø25</text>
<line x1="677.4" y1="445.5" x2="823.0" y2="445.5" stroke="#1fff1f" stroke-width="1.0" />
<line x1="677.4" y1="533.4" x2="823.0" y2="533.4" stroke="#1fff1f" stroke-width="1.0" />
<line x1="820.8" y1="445.5" x2="820.8" y2="533.4" stroke="#1fff1f" stroke-width="1.0" />
<path d="M820.8,445.5 L821.7,449.5 L819.9,449.5 Z" fill="#1fff1f" stroke="#1fff1f" stroke-width="0.4"/>
<path d="M820.8,533.4 L819.9,529.4 L821.7,529.4 Z" fill="#1fff1f" stroke="#1fff1f" stroke-width="0.4"/>
<line x1="785.4" y1="465.5" x2="807.5" y2="465.5" stroke="#1fff1f" stroke-width="1.0" />
<line x1="785.4" y1="514.0" x2="807.5" y2="514.0" stroke="#1fff1f" stroke-width="1.0" />
<line x1="805.4" y1="465.5" x2="805.4" y2="514.0" stroke="#1fff1f" stroke-width="1.0" />
<path d="M805.4,465.5 L806.3,469.5 L804.5,469.5 Z" fill="#1fff1f" stroke="#1fff1f" stroke-width="0.4"/>
<path d="M805.4,514.0 L804.5,510.0 L806.3,510.0 Z" fill="#1fff1f" stroke="#1fff1f" stroke-width="0.4"/>
<text x="802.9" y="489.5" font-size="8.4" fill="#66ff66" text-anchor="middle" transform="rotate(-90 802.9 489.5)" textLength="14.8" lengthAdjust="spacingAndGlyphs" >ø25</text>
<text x="818.7" y="506.0" font-size="8.4" fill="#66ff66" text-anchor="start" transform="rotate(-90 818.7 506.0)" textLength="15.3" lengthAdjust="spacingAndGlyphs" >ø45</text>
<text x="815.2" y="490.6" font-size="5.6" fill="#66ff66" text-anchor="start" transform="rotate(-90 815.2 490.6)" textLength="12.3" lengthAdjust="spacingAndGlyphs" >-0.05</text>
<text x="810.6" y="486.7" font-size="5.6" fill="#66ff66" text-anchor="middle" transform="rotate(-90 810.6 486.7)" >0</text>
<line x1="469.2" y1="513.4" x2="440.8" y2="587.8" stroke="#ffff00" stroke-width="1.0" />
<line x1="785.6" y1="514.3" x2="813.8" y2="590.3" stroke="#ffff00" stroke-width="1.0" />
<path d="M433.7,599.6 A5.3,5.3 0 1 1 442.1,599.6 M435.3,600 V597 A2.6,2.6 0 0 1 440.5,597 V600" stroke="#ffff00" stroke-width="1.0" fill="none" />
<path d="M434.7,591.6 L436.1,588.6 M441.1,591.6 L440.5,588.4" stroke="#ffff00" stroke-width="1.0" fill="none" />
<line x1="435.3" y1="600.0" x2="435.3" y2="621.5" stroke="#1fff1f" stroke-width="1.0" />
<line x1="440.5" y1="600.0" x2="440.5" y2="621.5" stroke="#1fff1f" stroke-width="1.0" />
<path d="M812.5,599.6 A5.3,5.3 0 1 1 820.9,599.6 M814.1,600 V597 A2.6,2.6 0 0 1 819.3,597 V600" stroke="#ffff00" stroke-width="1.0" fill="none" />
<path d="M816.3,591.6 L817.7,588.6 M813.5,591.6 L814.1,588.4" stroke="#ffff00" stroke-width="1.0" fill="none" />
<line x1="814.1" y1="600.0" x2="814.1" y2="621.5" stroke="#1fff1f" stroke-width="1.0" />
<line x1="819.3" y1="600.0" x2="819.3" y2="621.5" stroke="#1fff1f" stroke-width="1.0" />
<line x1="417.9" y1="620.6" x2="448.8" y2="620.6" stroke="#1fff1f" stroke-width="1.0" />
<path d="M435.3,620.6 L431.3,621.5 L431.3,619.7 Z" fill="#1fff1f" stroke="#1fff1f" stroke-width="0.4"/>
<path d="M440.5,620.6 L444.5,619.7 L444.5,621.5 Z" fill="#1fff1f" stroke="#1fff1f" stroke-width="0.4"/>
<text x="423.6" y="618.0" font-size="7.6" fill="#66ff66" text-anchor="middle" >22</text>
<line x1="805.0" y1="620.6" x2="836.0" y2="620.6" stroke="#1fff1f" stroke-width="1.0" />
<path d="M814.1,620.6 L810.1,621.5 L810.1,619.7 Z" fill="#1fff1f" stroke="#1fff1f" stroke-width="0.4"/>
<path d="M819.3,620.6 L823.3,619.7 L823.3,621.5 Z" fill="#1fff1f" stroke="#1fff1f" stroke-width="0.4"/>
<text x="830.3" y="618.0" font-size="7.6" fill="#66ff66" text-anchor="middle" >22</text>
<path d="M533.6,620.3 H492.4 L512.2,505.8" stroke="#1fff1f" stroke-width="1.0" fill="none" />
<path d="M512.2,505.8 L512.4,510.9 L510.3,510.5 Z" fill="#1fff1f" stroke="#1fff1f" stroke-width="0.4"/>
<text x="498.0" y="618.6" font-size="7.5" fill="#66ff66" text-anchor="start" textLength="35.0" lengthAdjust="spacingAndGlyphs" font-style="italic">2-PT3/8"</text>
<text x="63.8" y="30.2" font-size="8.3" fill="#ffffff" text-anchor="start" textLength="11.0" lengthAdjust="spacingAndGlyphs" >JIG</text>
<text x="80.8" y="30.2" font-size="8.3" fill="#ffffff" text-anchor="start" textLength="37.4" lengthAdjust="spacingAndGlyphs" >CYLINDER</text>
<text x="63.8" y="40.7" font-size="8.3" fill="#66ff66" text-anchor="start" textLength="24.3" lengthAdjust="spacingAndGlyphs" >Model:</text>
<text x="93.9" y="40.7" font-size="8.3" fill="#66ff66" text-anchor="start" textLength="13.6" lengthAdjust="spacingAndGlyphs" >JDD</text>
<text x="114.9" y="40.7" font-size="8.3" fill="#66ff66" text-anchor="start" textLength="29.8" lengthAdjust="spacingAndGlyphs" >100X50</text>
</svg>
</body></html>
